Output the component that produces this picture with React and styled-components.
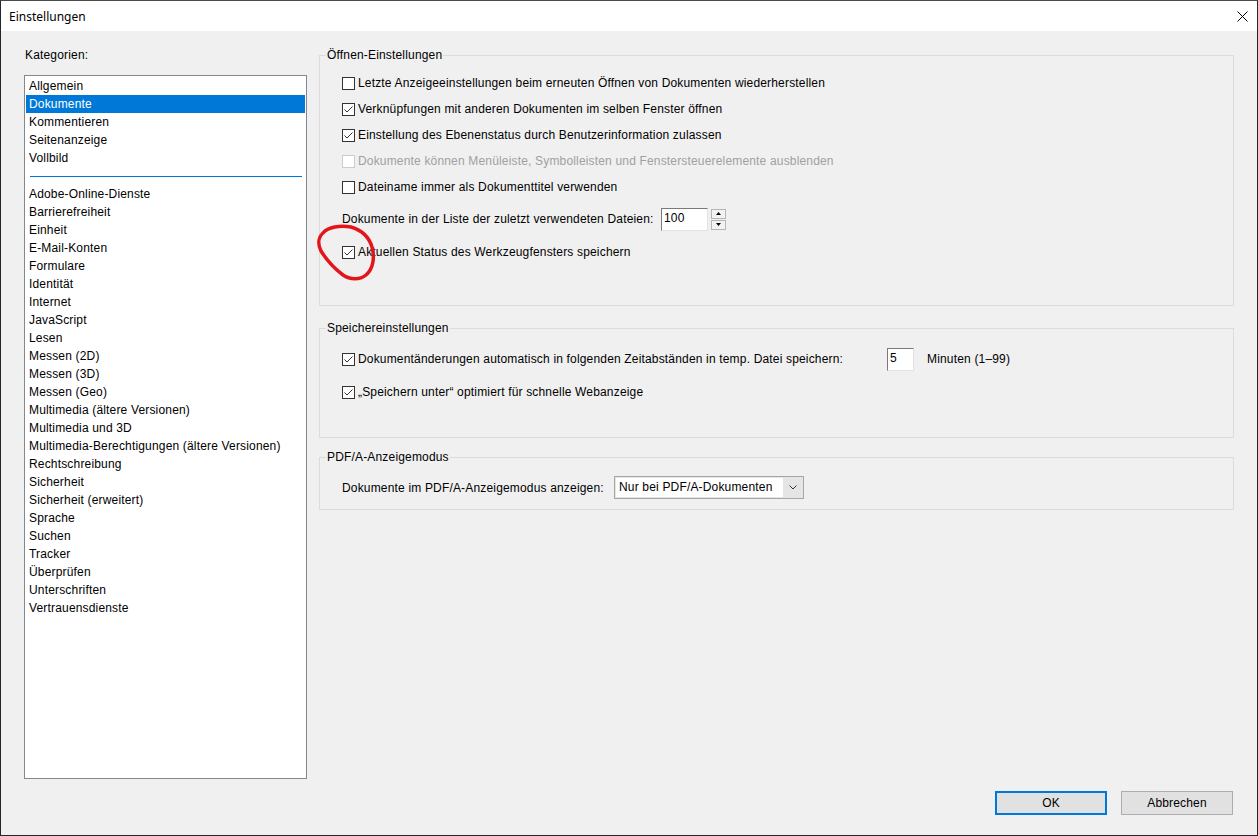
import React from 'react';
import styled, {createGlobalStyle} from 'styled-components';

const GlobalStyle = createGlobalStyle`
    html, body {
        margin: 0;
        padding: 0;
        background: #f0f0f0;
    }
    body {
        font-family: "Liberation Sans", Arial, sans-serif;
        font-size: 12px;
        letter-spacing: 0.17px;
        color: #000;
    }
`

const Window = styled.div`
    width: 1258px;
    height: 836px;
    box-sizing: border-box;
    border: 1px solid #262626;
    border-top-color: #4a4a4a;
    display: flex;
    flex-direction: column;
    background: #f0f0f0;
    overflow: hidden;
`

const TitleBar = styled.div`
    height: 30px;
    flex-shrink: 0;
    background: #fff;
    display: flex;
    align-items: center;
    justify-content: space-between;
    padding: 0 9px 0 8px;
    font-family: "Noto Sans", "Liberation Sans", sans-serif;
    font-size: 12px;
    letter-spacing: 0;
`

const CloseBtn = styled.span`
    display: flex;
    width: 11px;
    height: 11px;
`

const Body = styled.div`
    flex: 1;
    display: flex;
    flex-direction: column;
    padding: 14px 23px 19px 23px;
`

const Content = styled.div`
    display: flex;
    gap: 12px;
    height: 734px;
`

const LeftCol = styled.div`
    width: 283px;
    display: flex;
    flex-direction: column;
`

const CatLabel = styled.div`
    height: 20px;
    line-height: 20px;
    padding-left: 1px;
    margin-bottom: 10px;
`

const ListBox = styled.div`
    height: 704px;
    box-sizing: border-box;
    border: 1px solid #828790;
    background: #fff;
    padding: 1px 1px 0 1px;
`

const Item = styled.div`
    height: 18px;
    line-height: 18px;
    padding-left: 3px;
    background: ${p => p.$selected ? '#0078d7' : 'transparent'};
    color: ${p => p.$selected ? '#fff' : '#000'};
    white-space: nowrap;
`

const Separator = styled.div`
    height: 18px;
    display: flex;
    align-items: center;
    padding: 0 3px 0 4px;
    &::after {
        content: "";
        flex: 1;
        height: 1px;
        background: #0078d7;
    }
`

const RightCol = styled.div`
    flex: 1;
    display: flex;
    flex-direction: column;
    padding-top: 10px;
`

const Group = styled.div`
    position: relative;
    box-sizing: border-box;
    height: ${p => p.$height}px;
    margin-bottom: ${p => p.$gap || 0}px;
    border: 1px solid #dcdcdc;
    padding: ${p => p.$top}px 0 0 22px;
    display: flex;
    flex-direction: column;
`

const Legend = styled.span`
    position: absolute;
    top: -8px;
    left: 6px;
    line-height: 14px;
    padding: 0 1px;
    background: #f0f0f0;
`

const Row = styled.div`
    display: flex;
    align-items: center;
    height: ${p => p.$h || 26}px;
    margin-top: ${p => p.$mt || 0}px;
    color: ${p => p.$disabled ? '#a0a0a0' : '#000'};
    white-space: nowrap;
`

const Box = styled.span`
    width: 13px;
    height: 13px;
    box-sizing: border-box;
    border: 1px solid ${p => p.$disabled ? '#cccccc' : '#333'};
    background: #fff;
    margin-right: 3px;
    display: flex;
    flex-shrink: 0;
`

const Label = styled.span`
    width: ${p => p.$width ? p.$width + 'px' : 'auto'};
    flex-shrink: 0;
`

const TextInput = styled.span`
    width: ${p => p.$width}px;
    height: 23px;
    box-sizing: border-box;
    border: 1px solid #e3e3e3;
    border-top-color: #7a7a7a;
    border-left-color: #7a7a7a;
    background: #fff;
    padding: 1px 2px;
    line-height: 17px;
    flex-shrink: 0;
`

const Spin = styled.span`
    display: flex;
    flex-direction: column;
    gap: 1px;
    margin-left: 3px;
    height: 21px;
`

const SpinBtn = styled.span`
    width: 15px;
    height: 10px;
    box-sizing: border-box;
    border: 1px solid #b5b5b5;
    background: #f3f3f3;
    display: flex;
    align-items: center;
    justify-content: center;
`

const Unit = styled.span`
    margin-left: 13px;
`

const Select = styled.span`
    width: 190px;
    height: 23px;
    box-sizing: border-box;
    border: 1px solid #a6a6a6;
    background: #e5e5e5;
    display: flex;
    align-items: center;
`

const SelectText = styled.span`
    flex: 1;
    align-self: stretch;
    margin: 1px 0 0 1px;
    background: #fff;
    padding-left: 3px;
    line-height: 19px;
    height: 19px;
`

const SelectArrow = styled.span`
    width: 20px;
    display: flex;
    justify-content: center;
`

const Overlay = styled.svg`
    position: absolute;
    left: -4px;
    top: 166px;
    pointer-events: none;
`

const Footer = styled.div`
    margin-top: 12px;
    padding-right: 1px;
    display: flex;
    justify-content: flex-end;
    gap: 14px;
`

const Button = styled.button`
    width: 112px;
    height: 24px;
    box-sizing: border-box;
    border: ${p => p.$primary ? '2px solid #0078d7' : '1px solid #adadad'};
    background: #e1e1e1;
    font-family: "Liberation Sans", Arial, sans-serif;
    font-size: 12px;
    letter-spacing: 0.17px;
    color: #000;
    padding: 0;
`

const categoriesTop = ['Allgemein', 'Dokumente', 'Kommentieren', 'Seitenanzeige', 'Vollbild'];
const categoriesRest = [
    'Adobe-Online-Dienste', 'Barrierefreiheit', 'Einheit', 'E-Mail-Konten', 'Formulare',
    'Identität', 'Internet', 'JavaScript', 'Lesen', 'Messen (2D)', 'Messen (3D)', 'Messen (Geo)',
    'Multimedia (ältere Versionen)', 'Multimedia und 3D', 'Multimedia-Berechtigungen (ältere Versionen)',
    'Rechtschreibung', 'Sicherheit', 'Sicherheit (erweitert)', 'Sprache', 'Suchen', 'Tracker',
    'Überprüfen', 'Unterschriften', 'Vertrauensdienste'
];

function CheckBox({checked, disabled}) {
    return (
        <Box $disabled={disabled}>
            {checked && (
                <svg width="11" height="11" viewBox="0 0 11 11">
                    <path d="M1.5 5.5 L4 8 L9.5 2.5" fill="none" stroke="#333" strokeWidth="1" />
                </svg>
            )}
        </Box>
    )
}

function Check({checked, disabled, children, mt, width}) {
    return (
        <Row $mt={mt} $disabled={disabled}>
            <CheckBox checked={checked} disabled={disabled}/>
            <Label $width={width}>{children}</Label>
        </Row>
    )
}

function App() {
    return (
        <>
            <GlobalStyle/>
            <Window>
                <TitleBar>
                    <span>Einstellungen</span>
                    <CloseBtn>
                        <svg width="11" height="11" viewBox="0 0 11 11">
                            <path d="M0.5 0.5 L10.5 10.5 M10.5 0.5 L0.5 10.5" stroke="#000" strokeWidth="1" />
                        </svg>
                    </CloseBtn>
                </TitleBar>
                <Body>
                    <Content>
                        <LeftCol>
                            <CatLabel>Kategorien:</CatLabel>
                            <ListBox>
                                {categoriesTop.map(c => (
                                    <Item key={c} $selected={c === 'Dokumente'}>{c}</Item>
                                ))}
                                <Separator/>
                                {categoriesRest.map(c => (
                                    <Item key={c}>{c}</Item>
                                ))}
                            </ListBox>
                        </LeftCol>
                        <RightCol>
                            <Group $height={251} $gap={22} $top={14}>
                                <Legend>Öffnen-Einstellungen</Legend>
                                <Check>Letzte Anzeigeeinstellungen beim erneuten Öffnen von Dokumenten wiederherstellen</Check>
                                <Check checked>Verknüpfungen mit anderen Dokumenten im selben Fenster öffnen</Check>
                                <Check checked>Einstellung des Ebenenstatus durch Benutzerinformation zulassen</Check>
                                <Check disabled>Dokumente können Menüleiste, Symbolleisten und Fenstersteuerelemente ausblenden</Check>
                                <Check>Dateiname immer als Dokumenttitel verwenden</Check>
                                <Row $mt={6}>
                                    <Label $width={319}>Dokumente in der Liste der zuletzt verwendeten Dateien:</Label>
                                    <TextInput $width={47}>100</TextInput>
                                    <Spin>
                                        <SpinBtn>
                                            <svg width="5" height="3" viewBox="0 0 5 3"><path d="M2.5 0 L5 3 L0 3 Z" fill="#000"/></svg>
                                        </SpinBtn>
                                        <SpinBtn>
                                            <svg width="5" height="3" viewBox="0 0 5 3"><path d="M0 0 L5 0 L2.5 3 Z" fill="#000"/></svg>
                                        </SpinBtn>
                                    </Spin>
                                </Row>
                                <Check checked mt={7}>Aktuellen Status des Werkzeugfensters speichern</Check>
                                <Overlay width="63" height="62" viewBox="0 0 63 62">
                                    <path
                                        d="M7 11 C12 5, 24 3, 35 5 C45 8, 53 15, 56 25 C59 36, 57 47, 50 53 C44 58, 34 58, 27 53 C19 47, 10 37, 5 29 C1 21, 3 14, 8 10"
                                        fill="none" stroke="#e3151b" strokeWidth="3.5" strokeLinecap="round"/>
                                </Overlay>
                            </Group>
                            <Group $height={110} $gap={19} $top={17}>
                                <Legend>Speichereinstellungen</Legend>
                                <Row>
                                    <CheckBox checked/>
                                    <Label $width={529}>Dokumentänderungen automatisch in folgenden Zeitabständen in temp. Datei speichern:</Label>
                                    <TextInput $width={27}>5</TextInput>
                                    <Unit>Minuten (1–99)</Unit>
                                </Row>
                                <Check checked mt={7}>„Speichern unter“ optimiert für schnelle Webanzeige</Check>
                            </Group>
                            <Group $height={53} $top={18}>
                                <Legend>PDF/A-Anzeigemodus</Legend>
                                <Row $h={23}>
                                    <Label $width={272}>Dokumente im PDF/A-Anzeigemodus anzeigen:</Label>
                                    <Select>
                                        <SelectText>Nur bei PDF/A-Dokumenten</SelectText>
                                        <SelectArrow>
                                            <svg width="8" height="5" viewBox="0 0 8 5">
                                                <path d="M0.5 0.5 L4 4 L7.5 0.5" fill="none" stroke="#333" strokeWidth="1"/>
                                            </svg>
                                        </SelectArrow>
                                    </Select>
                                </Row>
                            </Group>
                        </RightCol>
                    </Content>
                    <Footer>
                        <Button $primary>OK</Button>
                        <Button>Abbrechen</Button>
                    </Footer>
                </Body>
            </Window>
        </>
    )
}

export default App;
